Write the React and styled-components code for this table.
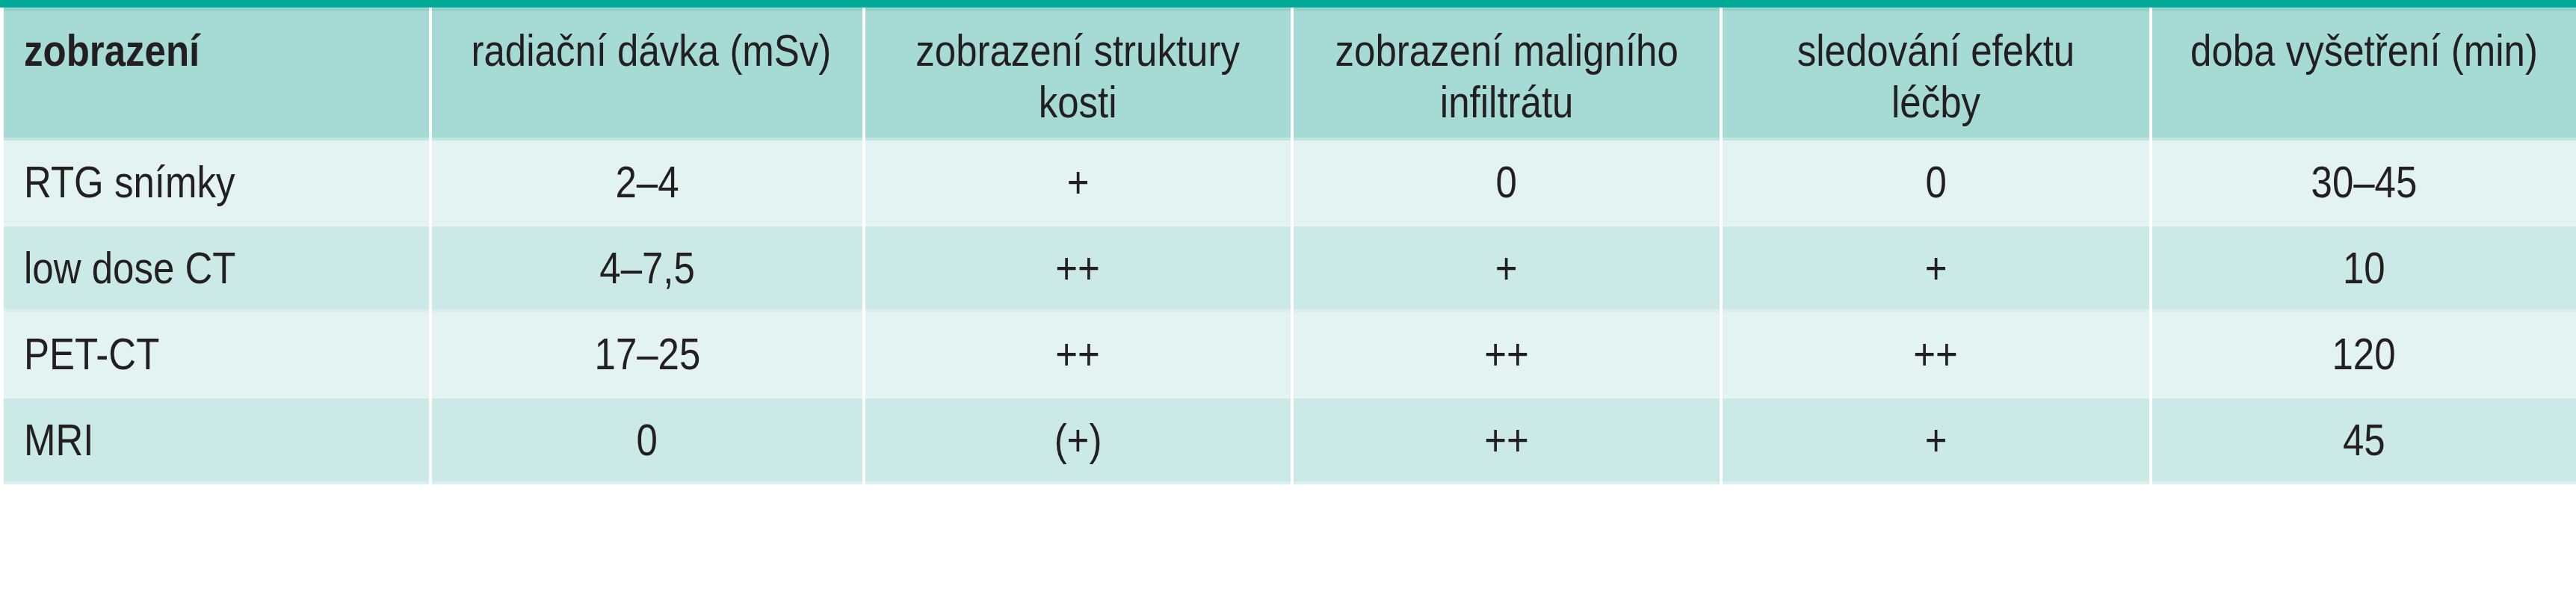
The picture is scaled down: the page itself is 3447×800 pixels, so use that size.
import React from "react";
import styled, { createGlobalStyle } from "styled-components";

const GlobalStyle = createGlobalStyle`
  html, body {
    margin: 0;
    padding: 0;
    background: #ffffff;
  }
  body {
    font-family: "Liberation Sans", Arial, sans-serif;
    color: #231f20;
  }
`;

const Page = styled.div`
  width: 3447px;
  height: 800px;
  background: #ffffff;
`;

const TopRule = styled.div`
  height: 10px;
  background: #00a896;
`;

const Table = styled.div`
  margin: 0 5px;
  display: grid;
  grid-template-columns: 569px 576px 569px 570px 571px 1fr;
  column-gap: 4px;
  background: #ffffff;
`;

const HeadCell = styled.div`
  background: #a6dad4;
  box-shadow: inset 0 5px 0 #93d2ca;
  box-sizing: border-box;
  height: 178px;
  border-bottom: 4px solid #c0e4e0;
  padding: 23px 10px 0 ${(p) => (p.$left ? "27px" : "10px")};
  font-size: 60px;
  line-height: 69px;
  font-weight: ${(p) => (p.$bold ? 700 : 400)};
  text-align: ${(p) => (p.$left ? "left" : "center")};
`;

const Cell = styled.div`
  background: ${(p) => (p.$alt ? "#cbe9e6" : "#e3f3f1")};
  height: 115px;
  box-sizing: border-box;
  border-bottom: 4px solid ${(p) => (p.$alt ? "#dbefed" : "#e6f4f2")};
  display: flex;
  align-items: center;
  justify-content: ${(p) => (p.$left ? "flex-start" : "center")};
  padding: 0 10px 0 ${(p) => (p.$left ? "27px" : "10px")};
  font-size: 60px;
  line-height: 69px;
`;

const Narrow = styled.span`
  display: inline-block;
  white-space: nowrap;
  transform: scaleX(0.85);
  transform-origin: ${(p) => (p.$left ? "left center" : "center center")};
`;

const headers = [
  { t: ["zobrazení"], left: true, bold: true },
  { t: ["radiační dávka (mSv)"] },
  { t: ["zobrazení struktury", "kosti"] },
  { t: ["zobrazení maligního", "infiltrátu"] },
  { t: ["sledování efektu", "léčby"] },
  { t: ["doba vyšetření (min)"] },
];

const rows = [
  ["RTG snímky", "2–4", "+", "0", "0", "30–45"],
  ["low dose CT", "4–7,5", "++", "+", "+", "10"],
  ["PET-CT", "17–25", "++", "++", "++", "120"],
  ["MRI", "0", "(+)", "++", "+", "45"],
];

export default function App() {
  return (
    <Page>
      <GlobalStyle />
      <TopRule />
      <Table>
        {headers.map((h, i) => (
          <HeadCell key={"h" + i} $left={h.left} $bold={h.bold}>
            <Narrow $left={h.left}>
              {h.t.map((line, j) => (
                <React.Fragment key={j}>
                  {j > 0 && <br />}
                  {line}
                </React.Fragment>
              ))}
            </Narrow>
          </HeadCell>
        ))}
        {rows.map((r, ri) =>
          r.map((v, ci) => (
            <Cell key={ri + "-" + ci} $alt={ri % 2 === 1} $left={ci === 0}>
              <Narrow $left={ci === 0}>{v}</Narrow>
            </Cell>
          ))
        )}
      </Table>
    </Page>
  );
}
